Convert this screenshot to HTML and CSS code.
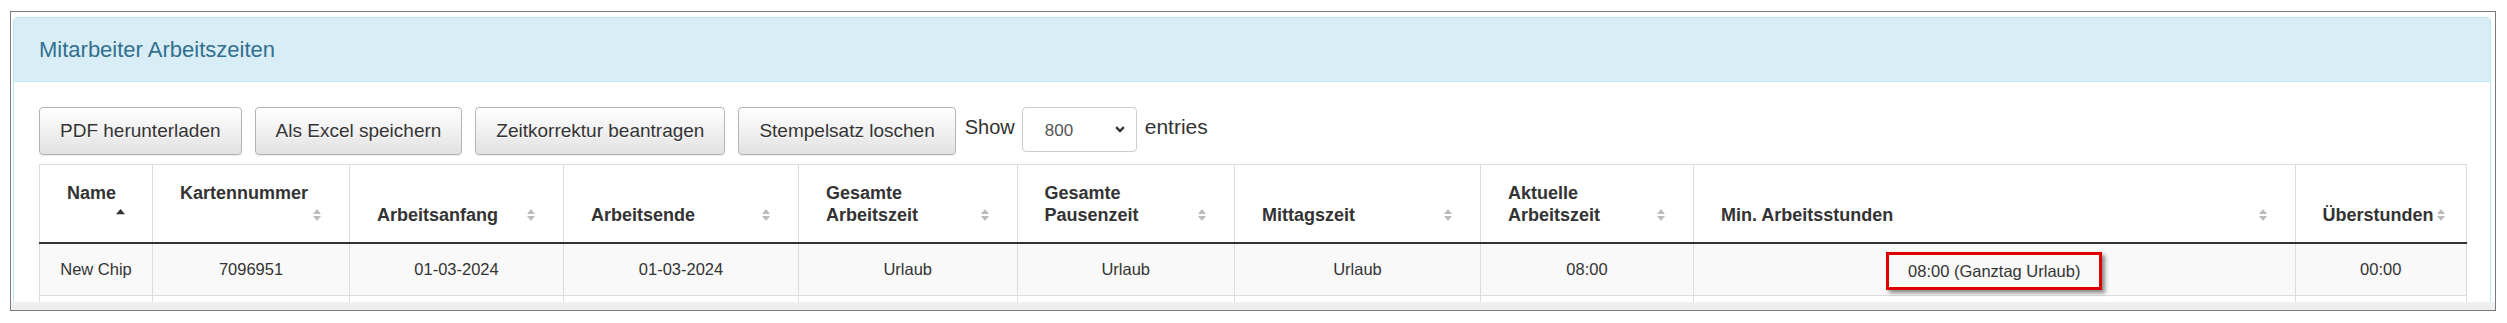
FILE: index.html
```html
<!DOCTYPE html>
<html lang="de">
<head>
<meta charset="utf-8">
<title>Mitarbeiter Arbeitszeiten</title>
<link rel="stylesheet" href="styles.css">
</head>
<body>
<div class="frame">
  <div class="viewport">
    <div class="panel">
      <div class="panel-heading">
        <h3 class="panel-title">Mitarbeiter Arbeitszeiten</h3>
      </div>
      <div class="panel-body">
        <div class="toolbar">
          <div class="buttons">
            <button class="btn" type="button">PDF herunterladen</button>
            <button class="btn" type="button">Als Excel speichern</button>
            <button class="btn" type="button">Zeitkorrektur beantragen</button>
            <button class="btn" type="button">Stempelsatz loschen</button>
          </div>
          <div class="length">
            <span class="length-text">Show</span>
            <div class="select">
              <span>800</span>
              <svg class="chev" width="10" height="7" viewBox="0 0 10 7"><path d="M1.2 1.2 5 5 8.8 1.2" fill="none" stroke="#333" stroke-width="2.4"/></svg>
            </div>
            <span class="length-text">entries</span>
          </div>
        </div>
        <table class="table">
          <colgroup>
            <col style="width:113px">
            <col style="width:197px">
            <col style="width:214px">
            <col style="width:235px">
            <col style="width:218.5px">
            <col style="width:217.5px">
            <col style="width:246px">
            <col style="width:213px">
            <col style="width:601.5px">
            <col style="width:171.5px">
          </colgroup>
          <thead>
            <tr>
              <th>Name<span class="sort asc"><svg width="9" height="12" viewBox="0 0 9 12"><path d="M0 5.2 4.5 0 9 5.2Z"/></svg></span></th>
              <th>Kartennummer<span class="sort"><svg width="8" height="12" viewBox="0 0 8 12"><path d="M0 5 4 0 8 5Z M0 7 4 12 8 7Z"/></svg></span></th>
              <th>Arbeitsanfang<span class="sort"><svg width="8" height="12" viewBox="0 0 8 12"><path d="M0 5 4 0 8 5Z M0 7 4 12 8 7Z"/></svg></span></th>
              <th>Arbeitsende<span class="sort"><svg width="8" height="12" viewBox="0 0 8 12"><path d="M0 5 4 0 8 5Z M0 7 4 12 8 7Z"/></svg></span></th>
              <th>Gesamte Arbeitszeit<span class="sort"><svg width="8" height="12" viewBox="0 0 8 12"><path d="M0 5 4 0 8 5Z M0 7 4 12 8 7Z"/></svg></span></th>
              <th>Gesamte Pausenzeit<span class="sort"><svg width="8" height="12" viewBox="0 0 8 12"><path d="M0 5 4 0 8 5Z M0 7 4 12 8 7Z"/></svg></span></th>
              <th>Mittagszeit<span class="sort"><svg width="8" height="12" viewBox="0 0 8 12"><path d="M0 5 4 0 8 5Z M0 7 4 12 8 7Z"/></svg></span></th>
              <th>Aktuelle Arbeitszeit<span class="sort"><svg width="8" height="12" viewBox="0 0 8 12"><path d="M0 5 4 0 8 5Z M0 7 4 12 8 7Z"/></svg></span></th>
              <th>Min. Arbeitsstunden<span class="sort"><svg width="8" height="12" viewBox="0 0 8 12"><path d="M0 5 4 0 8 5Z M0 7 4 12 8 7Z"/></svg></span></th>
              <th class="th-tight">Überstunden<span class="sort inline"><svg width="8" height="12" viewBox="0 0 8 12"><path d="M0 5 4 0 8 5Z M0 7 4 12 8 7Z"/></svg></span></th>
            </tr>
          </thead>
          <tbody>
            <tr class="odd">
              <td>New Chip</td>
              <td>7096951</td>
              <td>01-03-2024</td>
              <td>01-03-2024</td>
              <td>Urlaub</td>
              <td>Urlaub</td>
              <td>Urlaub</td>
              <td>08:00</td>
              <td><span class="highlight">08:00 (Ganztag Urlaub)</span></td>
              <td>00:00</td>
            </tr>
            <tr class="even">
              <td></td><td></td><td></td><td></td><td></td><td></td><td></td><td></td><td></td><td></td>
            </tr>
          </tbody>
        </table>
      </div>
    </div>
  </div>
  <div class="scrollbar"></div>
</div>
</body>
</html>
```

FILE: styles.css
```css
html, body {
  margin: 0;
  padding: 0;
  background: #ffffff;
}

body {
  font-family: "Liberation Sans", Arial, sans-serif;
  color: #333333;
}

.frame {
  margin: 11px 11px 0 10px;
  border: 1px solid #7b7b7b;
}

.viewport {
  height: 290px;
  box-sizing: border-box;
  padding: 5px 4px 0 2px;
  overflow: hidden;
}

.scrollbar {
  height: 8px;
  background: #efefef;
}

.panel {
  border: 1px solid #bce8f1;
  border-radius: 4px;
  background: #ffffff;
}

.panel-heading {
  height: 64px;
  box-sizing: border-box;
  display: flex;
  align-items: center;
  padding: 0 25px;
  background: #d9edf7;
  border-bottom: 1px solid #bce8f1;
  border-radius: 3px 3px 0 0;
}

.panel-title {
  margin: 0;
  font-size: 22px;
  font-weight: normal;
  color: #31708f;
}

.panel-body {
  padding: 25px 24px 0 25px;
}

.toolbar {
  display: flex;
  align-items: flex-start;
  height: 48px;
  margin-bottom: 9px;
}

.buttons {
  display: flex;
  gap: 13px;
}

.btn {
  height: 48px;
  box-sizing: border-box;
  padding: 0 20px;
  font-family: "Liberation Sans", Arial, sans-serif;
  font-size: 19px;
  color: #333333;
  border: 1px solid #b4b4b4;
  border-radius: 4px;
  background: linear-gradient(to bottom, #ffffff 0%, #e2e2e2 100%);
  box-shadow: 0 1px 1px rgba(0, 0, 0, 0.08);
  text-shadow: 0 1px 0 #ffffff;
}

.length {
  display: flex;
  align-items: flex-start;
  margin-left: 9px;
  font-size: 20px;
  color: #333333;
}

.length-text {
  line-height: 24px;
  margin-top: 8px;
}

.length-text:last-child {
  font-size: 21px;
}

.select {
  width: 115px;
  height: 45px;
  box-sizing: border-box;
  margin: 0 8px 0 7px;
  padding: 3px 11px 0 22px;
  display: flex;
  align-items: center;
  justify-content: space-between;
  border: 1px solid #cccccc;
  border-radius: 4px;
  background: #ffffff;
  font-size: 17px;
  color: #555555;
}

.chev {
  display: block;
  margin-top: -3px;
}

.table {
  width: 2427px;
  table-layout: fixed;
  border-collapse: collapse;
}

.table th {
  border: 1px solid #dddddd;
  border-bottom: 2px solid #333333;
  padding: 17px 28px 16px 27px;
  vertical-align: bottom;
  text-align: left;
  font-size: 18px;
  font-weight: bold;
  line-height: 22px;
  color: #333333;
  background: #ffffff;
}

.table th.th-tight {
  padding-right: 10px;
  white-space: nowrap;
}

.sort {
  float: right;
  height: 22px;
  margin-left: 8px;
  display: flex;
  align-items: center;
  fill: #bbbbbb;
}

.sort.asc {
  fill: #333333;
  margin-right: -1px;
}

.sort.inline {
  float: none;
  display: inline-flex;
  vertical-align: top;
  margin-left: 3px;
}

.table td {
  border: 1px solid #dddddd;
  padding: 13px 8px;
  height: 24px;
  line-height: 24px;
  text-align: center;
  font-size: 16.5px;
  color: #333333;
}

.table tr.odd td {
  background: #f9f9f9;
}

.table tr.even td {
  background: #ffffff;
}

.highlight {
  display: inline-block;
  vertical-align: middle;
  margin: -8px 0;
  padding: 4px 19px;
  line-height: 24px;
  border: 3px solid #e10000;
  box-shadow: 3px 3px 4px rgba(0, 0, 0, 0.45);
}
```
